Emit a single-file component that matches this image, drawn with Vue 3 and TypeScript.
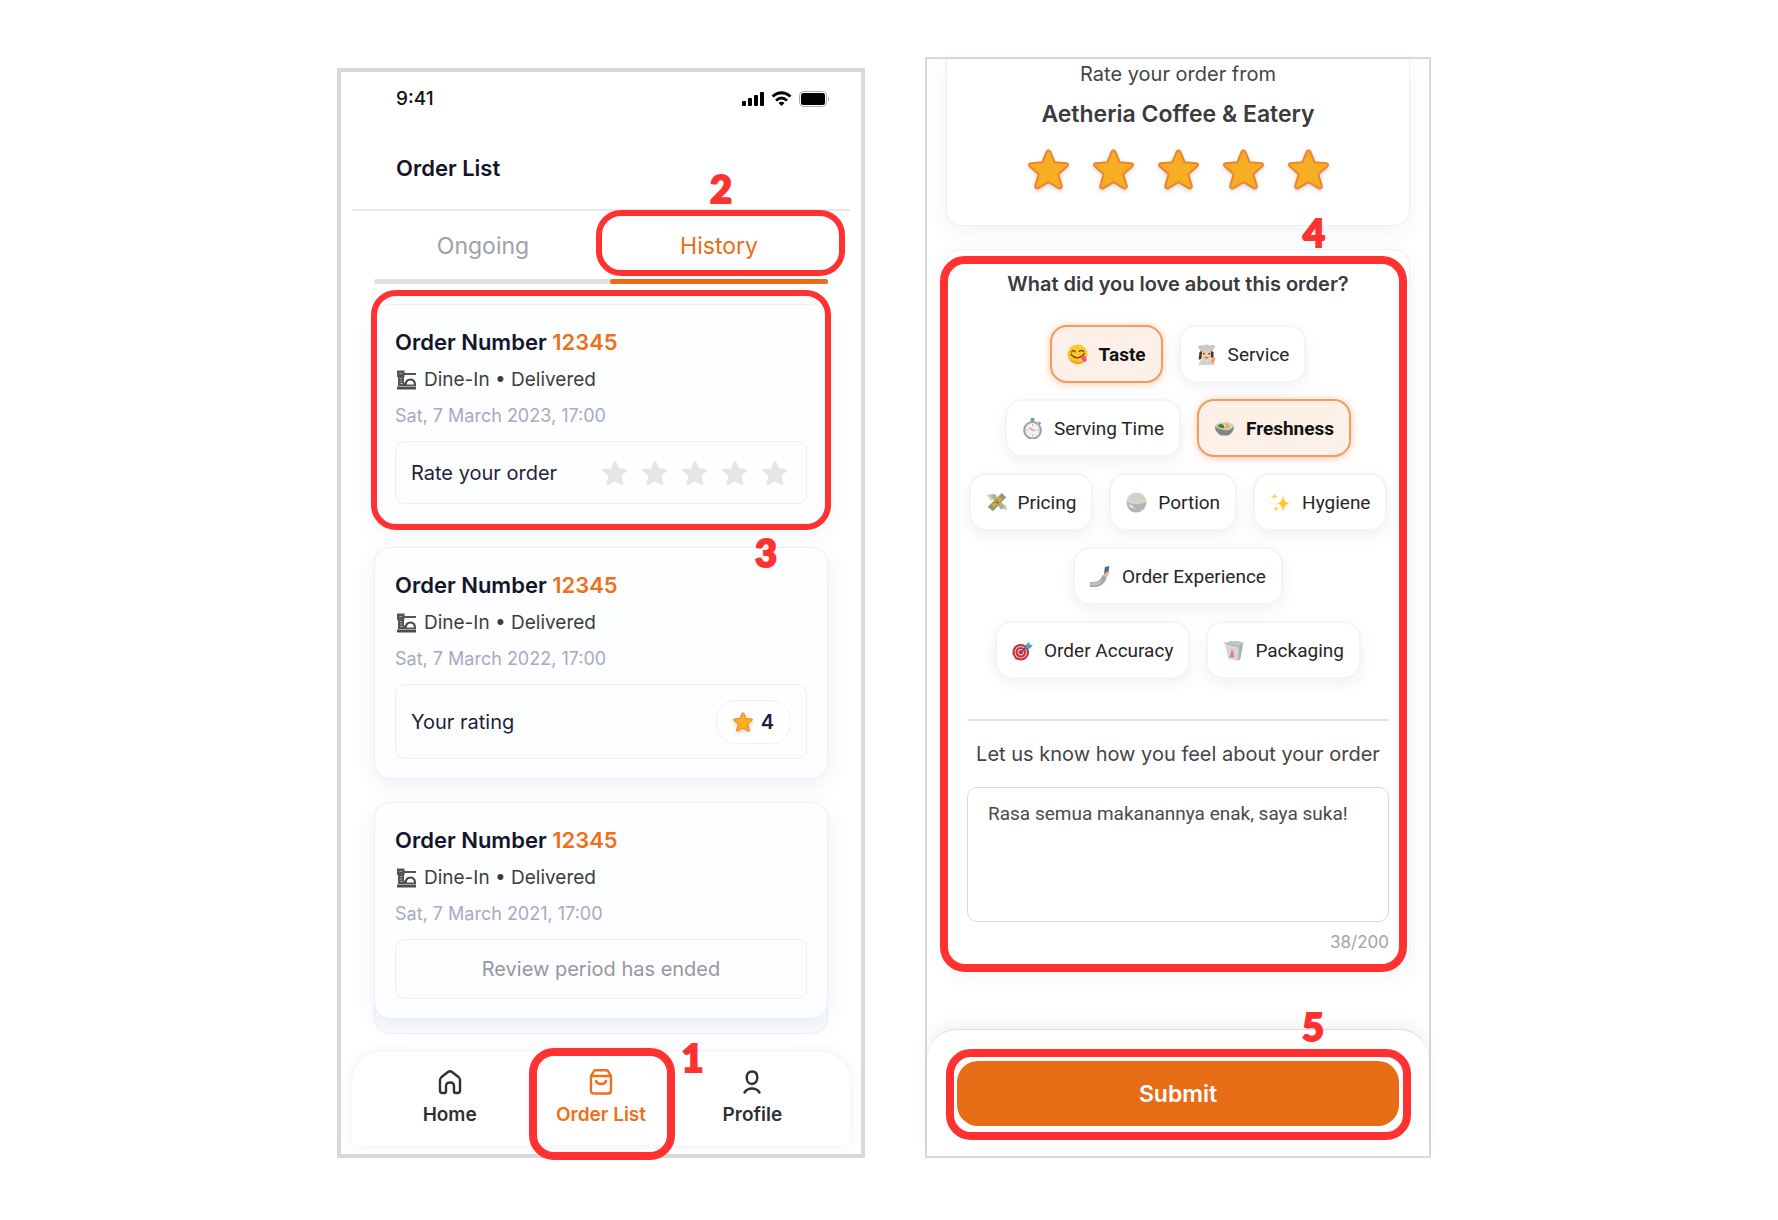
<script setup lang="ts">
import { computed, ref } from 'vue'

interface Order {
  id: number
  number: string
  date: string
  state: 'unrated' | 'rated' | 'ended'
  rating?: number
}

interface Reason {
  icon: string
  label: string
}

const orders: Order[] = [
  { id: 1, number: '12345', date: 'Sat, 7 March 2023, 17:00', state: 'unrated' },
  { id: 2, number: '12345', date: 'Sat, 7 March 2022, 17:00', state: 'rated', rating: 4 },
  { id: 3, number: '12345', date: 'Sat, 7 March 2021, 17:00', state: 'ended' },
]

const reasonRows: Reason[][] = [
  [{ icon: 'yum', label: 'Taste' }, { icon: 'chef', label: 'Service' }],
  [{ icon: 'timer', label: 'Serving Time' }, { icon: 'bowl', label: 'Freshness' }],
  [{ icon: 'money', label: 'Pricing' }, { icon: 'rice', label: 'Portion' }, { icon: 'sparkles', label: 'Hygiene' }],
  [{ icon: 'selfie', label: 'Order Experience' }],
  [{ icon: 'target', label: 'Order Accuracy' }, { icon: 'box', label: 'Packaging' }],
]

const tab = ref<'ongoing' | 'history'>('history')
const picked = ref<string[]>(['Taste', 'Freshness'])
const comment = ref('Rasa semua makanannya enak, saya suka!')
const limit = 200
const counter = computed(() => `${comment.value.length}/${limit}`)

function toggle(label: string) {
  picked.value = picked.value.includes(label)
    ? picked.value.filter((item) => item !== label)
    : [...picked.value, label]
}
</script>

<template>
  <main class="guide">
    <svg class="sprite" aria-hidden="true">
      <symbol id="star" viewBox="0 0 40 40">
        <path d="M18.3 2.4Q20 .2 21.7 2.4L26 12.9 37.6 13.8Q40 14.6 38.4 16.8L29.6 24.5 33 36.3Q32.800 39.200 30 38.300L20 32.400 10 38.300Q7.200 39.200 7 36.300L10.400 24.500 1.600 16.800Q0 14.600 2.400 13.800L14 12.900Z" />
      </symbol>
      <symbol id="dine" viewBox="-2 0 22 20">
        <path d="M0 .5H7.500V3H19V5H7.500V7H7V12Q8 14 10 14.500H19V16H1V7H0Z" fill="#555656" />
        <path d="M3 8.500H5M3 11H5M3 13.500H6M2.500 3.500H5" stroke="#a4a5a6" stroke-width="1" />
        <path d="M8.500 15Q9 9.500 13.500 9.500T18 15" fill="none" stroke="#444545" stroke-width="2" />
        <path d="M0 18H19" stroke="#4d4e4e" stroke-width="3" />
      </symbol>
      <symbol id="yum" viewBox="0 0 24 24">
        <circle cx="12" cy="12" r="11.500" fill="#fcc62d" />
        <path d="M3 17A11.500 11.500 0 0 0 21 19Q12 23 3 17Z" fill="#f19a20" />
        <path d="M5 9.500Q7 6 9.500 9M14 8.500Q17 6 19 9M4.500 12Q12 20 20 11" fill="none" stroke="#6d4112" stroke-width="1.400" stroke-linecap="round" />
        <path d="M16 15Q20 11 22 16T19 20Q17 19 16 15Z" fill="#f0519c" />
      </symbol>
      <symbol id="chef" viewBox="0 0 24 24">
        <path d="M2 3Q5 0 8 2Q12-1 16 2Q20-1 22 3L19 8H5Z" fill="#c9c9c7" />
        <path d="M5 8H19V15Q16 19 12 19T5 15Z" fill="#f2cdb0" />
        <path d="M4 9L7 8 6 17 3 18ZM17 8L20 9V16L17 15Z" fill="#47302a" />
        <path d="M3 24Q4 17 9 17L12 20 16 17Q20 18 21 24Z" fill="#d2d2d2" />
        <path d="M8 11H10M14 11H16" stroke="#3f302b" stroke-width="1.600" />
        <path d="M10 15Q12 17 14 15" fill="none" stroke="#c54a40" stroke-width="1.300" />
        <path d="M17 19L20 14 22 17 20 23Z" fill="#eda067" />
      </symbol>
      <symbol id="timer" viewBox="0 0 24 24">
        <path d="M10 0H14V5H10ZM18 3L22 6 20 8Z" fill="#8b919c" />
        <circle cx="12" cy="14" r="9.500" fill="#f1f1f2" stroke="#9ba0aa" stroke-width="2.400" />
        <path d="M12 7V9M12 19V21M5 14H7M17 14H19" stroke="#a5a8ae" stroke-width="1" />
        <path d="M12 14L8 11M12 14H15" stroke="#e08070" stroke-width="1.200" />
      </symbol>
      <symbol id="bowl" viewBox="0 0 24 24">
        <ellipse cx="12" cy="10" rx="11" ry="5" fill="#b9bcb9" />
        <ellipse cx="12" cy="9.500" rx="9" ry="3.500" fill="#ead9a5" />
        <path d="M4 9Q7 5 11 8L12 11Q8 13 4 9Z" fill="#368a35" />
        <path d="M13 7L17 9M12 11L18 10" stroke="#d69b4d" stroke-width="1.400" />
        <path d="M1 10Q2 17 8 20H16Q22 17 23 10Q18 15 12 14T1 10Z" fill="#7e868a" />
        <path d="M6 1Q8 3 6 5M15 1Q13 3 15 5" fill="none" stroke="#dfe3e5" stroke-width="1" />
      </symbol>
      <symbol id="money" viewBox="0 0 24 24">
        <path d="M1 3L8 2 11 8 5 10ZM15 12L23 15 24 21 15 18Z" fill="#d0d0c3" />
        <path d="M18 1L23 6 8 22 2 17Z" fill="#8b9874" />
        <path d="M5 4L10 2 22 17 17 20Z" fill="#a7ad8a" opacity=".85" />
        <path d="M16 5L19 8 9 18 6 15Z" fill="#d5a938" />
        <path d="M12 9L14 14M10 12L15 12" stroke="#8b6b2a" stroke-width="1.200" />
      </symbol>
      <symbol id="rice" viewBox="0 0 24 24">
        <circle cx="12" cy="12" r="11.500" fill="#c8c8c8" />
        <path d="M1 12Q2 1 12 1T23 12Q12 16 1 12Z" fill="#d9d2c9" />
        <path d="M1 12Q12 16 23 12Q22 22 12 23T1 12Z" fill="#b4b4b6" />
        <path d="M3 14Q5 19 11 19Q7 17 7 15Z" fill="#eee" />
        <path d="M7 5L8 7M12 4L11 6M16 6L17 8M9 9H11" stroke="#bbb2a8" stroke-width="1" />
      </symbol>
      <symbol id="sparkles" viewBox="0 0 24 24">
        <path d="M15 4Q16 12 22 13Q16 14 15 23Q14 14 8 13Q14 12 15 4Z" fill="#ffc928" />
        <path d="M5 1Q5.500 4.500 9 5Q5.500 5.500 5 9Q4.500 5.500 1 5Q4.500 4.500 5 1ZM7 16Q7.500 18.500 10 19Q7.500 19.500 7 22Q6.500 19.500 4 19Q6.500 18.500 7 16Z" fill="#ffd35b" />
      </symbol>
      <symbol id="selfie" viewBox="0 0 24 24">
        <path d="M17 1L22 0 21 8 16 9Z" fill="#456b8c" />
        <path d="M19 6L22 8 18 15 15 12Z" fill="#f0b48c" />
        <path d="M15 10L19 14Q16 22 8 24H0V18Q8 19 11 16Z" fill="#a4a6aa" />
        <path d="M1 19Q8 20 12 17L15 14Q13 21 7 22H1Z" fill="#c0c1c4" />
      </symbol>
      <symbol id="target" viewBox="0 0 24 24">
        <circle cx="10" cy="14" r="9.500" fill="#cd2f38" />
        <circle cx="10" cy="14" r="6.500" fill="none" stroke="#f2bfc2" stroke-width="1.200" />
        <circle cx="10" cy="14" r="3" fill="none" stroke="#f2bfc2" stroke-width="1.200" />
        <path d="M10 14L18 7" stroke="#1f6b80" stroke-width="1.600" />
        <path d="M16 5L20 2 20 5 24 6 20 10 16 9Z" fill="#3eabc4" />
      </symbol>
      <symbol id="box" viewBox="0 0 24 24">
        <path d="M4 3L8 1H18L23 3 20 8H3Z" fill="#c3c4c6" />
        <path d="M2 4L18 8 17 24 6 21Z" fill="#d6d6d8" />
        <path d="M18 8L23 4 20 21 17 24Z" fill="#aeb0b3" />
        <path d="M1 3L8 5 18 8 23 3" fill="none" stroke="#a8aaad" stroke-width="1" />
        <path d="M10 10L12 14 13 20H7L9 15Z" fill="#dc8288" />
      </symbol>
    </svg>

    <section class="phone orders" aria-label="Order List">
      <div class="status">
        <span class="clock">9:41</span>
        <svg width="88" height="16" viewBox="0 0 88 16" aria-hidden="true">
          <rect x="0" y="10" width="4" height="5" rx="1" />
          <rect x="6" y="7" width="4" height="8" rx="1" />
          <rect x="12" y="4" width="4" height="11" rx="1" />
          <rect x="18" y="1" width="4" height="14" rx="1" />
          <g fill="none" stroke="#000" stroke-width="2.800">
            <path d="M30.500 5.500Q39.500-2 48.500 5.500" />
            <path d="M34 9.500Q39.500 4.500 45 9.500" />
          </g>
          <path d="M36.500 12Q39.500 9.500 42.500 12L39.500 15Z" />
          <rect x="57.500" y=".5" width="27" height="15" rx="4" fill="none" stroke="#aaa" />
          <rect x="59" y="2" width="24" height="12" rx="2.500" />
          <path d="M86 5.500Q88 8 86 10.500Z" fill="#aaa" />
        </svg>
      </div>

      <h1 class="heading">Order List</h1>

      <div class="tabs" role="tablist">
        <button type="button" role="tab" class="tab" :class="{ on: tab === 'ongoing' }" :aria-selected="tab === 'ongoing'" @click="tab = 'ongoing'">Ongoing</button>
        <button type="button" role="tab" class="tab" :class="{ on: tab === 'history' }" :aria-selected="tab === 'history'" @click="tab = 'history'">History</button>
        <span class="ring ring-tab"></span>
        <span class="step step-tab">2</span>
      </div>

      <div class="list">
        <article v-for="(order, index) in orders" :key="order.id" class="card">
          <h2 class="number">Order Number <span>{{ order.number }}</span></h2>
          <p class="kind"><svg width="22" height="20"><use href="#dine" /></svg>Dine-In • Delivered</p>
          <p class="date">{{ order.date }}</p>
          <div class="review" :class="order.state">
            <template v-if="order.state === 'unrated'">
              <span>Rate your order</span>
              <div class="rate">
                <button v-for="n in 5" :key="n" type="button" :aria-label="`${n} stars`"><svg width="26" height="26"><use href="#star" /></svg></button>
              </div>
            </template>
            <template v-else-if="order.state === 'rated'">
              <span>Your rating</span>
              <span class="score"><svg class="gold" width="20" height="20"><use href="#star" /></svg>{{ order.rating }}</span>
            </template>
            <span v-else>Review period has ended</span>
          </div>
          <template v-if="index === 0">
            <span class="ring ring-card"></span>
            <span class="step step-card">3</span>
          </template>
        </article>
        <div class="peek"></div>
      </div>

      <nav class="nav">
        <a href="#home">
          <svg width="24" height="26" viewBox="0 0 24 26"><path d="M4.500 24Q2 24 2 21.500V11Q2 9.500 3.500 8L10 3Q12 1.500 14 3L20.500 8Q22 9.500 22 11V21.500Q22 24 19.500 24H17.500Q16 24 16 22V17Q16 13.500 12 13.500T8 17V22Q8 24 6.500 24Z" /></svg>
          Home
        </a>
        <a href="#orders" class="current">
          <svg width="24" height="26" viewBox="0 0 24 26"><path d="M2 7L5 2Q5.500 1.200 6.500 1.200H17.500Q18.500 1.200 19 2L22 7V21.500Q22 24.500 19 24.500H5Q2 24.500 2 21.500ZM2 7H22M7 12Q8 15 12 15T17 12" /></svg>
          Order List
          <span class="ring ring-nav"></span>
          <span class="step step-nav">1</span>
        </a>
        <a href="#profile">
          <svg width="24" height="26" viewBox="0 0 24 26"><path d="M12 2.500C15.500 2.500 17.300 5 17.300 8.500S15.500 15 12 15 6.700 12 6.700 8.500 8.500 2.500 12 2.500ZM4.500 23.500Q7 19.500 12 19.500T19.500 23.500" /></svg>
          Profile
        </a>
      </nav>
    </section>

    <form class="phone rating" aria-label="Rate your order" @submit.prevent>
      <section class="panel venue">
        <p>Rate your order from</p>
        <h2>Aetheria Coffee &amp; Eatery</h2>
        <div class="stars">
          <button v-for="n in 5" :key="n" type="button" :aria-label="`${n} stars`"><svg class="gold" width="41" height="41"><use href="#star" /></svg></button>
        </div>
      </section>

      <section class="panel feedback">
        <h2>What did you love about this order?</h2>
        <div class="reasons">
          <div v-for="(row, index) in reasonRows" :key="index" class="row">
            <button v-for="reason in row" :key="reason.label" type="button" class="chip" :class="{ on: picked.includes(reason.label) }" :aria-pressed="picked.includes(reason.label)" @click="toggle(reason.label)">
              <svg width="21" height="21"><use :href="`#${reason.icon}`" /></svg>{{ reason.label }}
            </button>
          </div>
        </div>
        <hr />
        <label for="comment">Let us know how you feel about your order</label>
        <textarea id="comment" v-model="comment" :maxlength="limit"></textarea>
        <p class="counter">{{ counter }}</p>
        <span class="ring ring-feedback"></span>
        <span class="step step-feedback">4</span>
      </section>

      <div class="action">
        <button type="submit" class="submit">Submit</button>
        <span class="ring ring-submit"></span>
        <span class="step step-submit">5</span>
      </div>
    </form>
  </main>
</template>

<style>
body {
  margin: 0;
  background: #fff;
}
</style>

<style scoped>
* {
  box-sizing: border-box;
}

.guide {
  display: flex;
  justify-content: center;
  align-items: flex-end;
  gap: 60px;
  padding: 57px 10px 63px 0;
  font-family: Inter, "Liberation Sans", sans-serif;
  color: #444;
}

h1, h2, p {
  margin: 0;
}

button {
  padding: 0;
  border: 0;
  background: none;
  font: inherit;
  color: inherit;
  cursor: pointer;
}

svg {
  display: block;
  flex: none;
}

.sprite {
  position: absolute;
  width: 0;
  height: 0;
}

.phone {
  display: flex;
  flex-direction: column;
  min-width: 0;
  background: #fff;
}

.orders {
  flex: 0 1 528px;
  border: 4px solid #d9d9d9;
  padding: 0 11px 9px;
}

.status {
  display: flex;
  justify-content: space-between;
  align-items: center;
  height: 54px;
  padding: 0 20px 0 44px;
}

.clock {
  font-size: 19px;
  font-weight: 500;
  line-height: 24px;
  color: #111;
}

.heading {
  padding: 26px 44px 25px;
  border-bottom: 2px solid #e8e8ea;
  font-size: 22px;
  font-weight: 600;
  line-height: 32px;
  color: #14142b;
}

.tabs {
  position: relative;
  display: grid;
  grid-template-columns: 1fr 1fr;
  gap: 18px;
  height: 73px;
  margin: 0 22px;
}

.tabs::before {
  content: "";
  position: absolute;
  inset: auto 0 0;
  height: 5px;
  border-radius: 3px;
  background: #e0e0e0;
}

.tab {
  position: relative;
  padding-bottom: 4px;
  font-size: 23px;
  line-height: 32px;
  color: #a0a0ac;
}

.tab.on {
  color: #e96d17;
}

.tab.on::after {
  content: "";
  position: absolute;
  inset: auto 0 0;
  height: 5px;
  border-radius: 3px;
  background: #e96d17;
}

.list {
  display: flex;
  flex-direction: column;
  gap: 23px;
  margin: 20px 22px 0;
}

.card {
  position: relative;
  z-index: 1;
  padding: 21px 20px 19px;
  border: 1px solid #eceff5;
  border-radius: 16px;
  background: #fdfeff;
  box-shadow: 0 6px 20px rgba(60, 80, 140, 0.09);
}

.card:first-child {
  z-index: 2;
}

.number {
  font-size: 22px;
  font-weight: 600;
  line-height: 32px;
  color: #14142b;
}

.number span {
  color: #ee701b;
}

.kind {
  display: flex;
  align-items: center;
  gap: 7px;
  margin: 8px 0;
  font-size: 19px;
  line-height: 28px;
  color: #3c3d3d;
}

.date {
  margin-bottom: 11px;
  font-size: 18px;
  line-height: 28px;
  color: #a9a9c0;
}

.review {
  display: flex;
  justify-content: space-between;
  align-items: center;
  padding: 0 15px;
  border: 1px solid #eceef3;
  border-radius: 10px;
  font-size: 20px;
  line-height: 28px;
  color: #1f1f3a;
}

.review.unrated {
  height: 63px;
}

.review.rated {
  height: 75px;
}

.review.ended {
  justify-content: center;
  height: 60px;
  color: #9697a0;
}

.rate {
  display: flex;
  gap: 14px;
  padding-right: 3px;
  fill: #e4e5e7;
}

.gold {
  overflow: visible;
  fill: #f8ae23;
  stroke: #ef8432;
  stroke-width: 2px;
  filter: drop-shadow(0 2px 2px rgba(0, 0, 0, 0.15));
}

.score {
  display: flex;
  align-items: center;
  gap: 8px;
  height: 44px;
  padding: 0 16px;
  border: 1px solid #eef0f3;
  border-radius: 20px;
  background: #fff;
  font-weight: 600;
}

.peek {
  height: 46px;
  margin-top: -54px;
  border: 1px solid #eceff5;
  border-radius: 16px;
  background: #fafcfe;
}

.nav {
  position: relative;
  z-index: 2;
  display: flex;
  height: 93px;
  margin-top: 18px;
  padding: 0 22px;
  border-radius: 30px 30px 0 0;
  background: #fff;
  box-shadow: 0 0 14px rgba(0, 0, 0, 0.07);
}

.nav a {
  position: relative;
  display: flex;
  flex: 1;
  flex-direction: column;
  align-items: center;
  gap: 6px;
  padding-top: 17px;
  font-size: 19px;
  font-weight: 600;
  line-height: 28px;
  color: #303033;
  text-decoration: none;
}

.nav path {
  fill: none;
  stroke: currentColor;
  stroke-width: 2.4px;
  stroke-linecap: round;
  stroke-linejoin: round;
}

.nav .current {
  color: #ee701b;
}

.rating {
  flex: 0 1 506px;
  border: 2px solid #d9d9da;
}

.panel {
  position: relative;
  margin: 0 19px;
  border: 1px solid #eff0f4;
  border-radius: 16px;
  background: #fff;
  box-shadow: 0 6px 20px rgba(60, 80, 140, 0.07);
  text-align: center;
}

.panel h2 {
  color: #3b3b3d;
  font-weight: 600;
}

.venue {
  height: 167px;
  border-top: 0;
  border-radius: 0 0 16px 16px;
}

.venue p {
  font-size: 20px;
  line-height: 30px;
}

.venue h2 {
  margin: 9px 0 19px;
  font-size: 23px;
  line-height: 32px;
}

.stars {
  display: flex;
  justify-content: center;
  gap: 24px;
}

.feedback {
  margin-top: 23px;
  padding: 19px 20px 11px;
}

.feedback h2 {
  font-size: 20px;
  line-height: 30px;
}

.reasons {
  display: flex;
  flex-direction: column;
  gap: 16px;
  margin: 26px 0 40px;
}

.row {
  display: flex;
  justify-content: center;
  gap: 16px;
}

.chip {
  display: flex;
  align-items: center;
  gap: 11px;
  height: 58px;
  padding: 0 15px;
  border: 2px solid #f3f4f7;
  border-radius: 17px;
  background: #fff;
  box-shadow: 0 5px 14px rgba(60, 80, 140, 0.08);
  font-family: Roboto, sans-serif;
  font-size: 19px;
  white-space: nowrap;
  color: #262626;
}

.chip.on {
  border-color: #f49b5f;
  background: #fdf0e9;
  box-shadow: 0 1px 8px rgba(240, 120, 40, 0.4);
  font-weight: 700;
  color: #111;
}

hr {
  height: 2px;
  margin: 0;
  border: 0;
  background: #e0dff8;
}

label {
  display: block;
  margin: 18px 0;
  font-size: 20px;
  line-height: 30px;
  white-space: nowrap;
}

textarea {
  display: block;
  width: 100%;
  height: 135px;
  padding: 14px 20px;
  border: 1px solid #dcdcdf;
  border-radius: 10px;
  background: #fff;
  font-family: Roboto, sans-serif;
  font-size: 19px;
  line-height: 24px;
  color: #4a4a4c;
  resize: none;
}

.counter {
  margin-top: 5px;
  font-size: 17px;
  line-height: 30px;
  text-align: right;
  color: #a3a3ab;
}

.action {
  position: relative;
  margin-top: 60px;
  padding: 31px 30px 30px;
  border-top: 1px solid #dbd9f3;
  border-radius: 30px 30px 0 0;
  background: #fff;
  box-shadow: 0 -6px 16px rgba(0, 0, 0, 0.05);
}

.submit {
  display: block;
  width: 100%;
  height: 65px;
  border-radius: 21px;
  background: #e76d17;
  font-size: 23px;
  font-weight: 600;
  color: #fff;
}

/* Walkthrough markers laid over the screens */
.ring {
  position: absolute;
  z-index: 3;
  border: 8px solid #ff3131;
  border-radius: 25px;
  pointer-events: none;
}

.step {
  position: absolute;
  z-index: 3;
  font-family: Lato, sans-serif;
  font-size: 38px;
  font-weight: 900;
  line-height: 38px;
  color: #ff3131;
  -webkit-text-stroke: 2px #ff3131;
}

.ring-tab {
  inset: -1px -17px 8px 222px;
  border-width: 6px;
}

.step-tab {
  right: 96px;
  top: -42px;
}

.ring-card {
  inset: -15px -4px -7px;
  border-width: 6px;
}

.step-card {
  right: 50px;
  bottom: -48px;
}

.ring-nav {
  inset: -4px 2px -15px 4px;
}

.step-nav {
  right: -27px;
  top: -14px;
}

.ring-feedback {
  inset: 6px 2px -4px -7px;
}

.step-feedback {
  right: 84px;
  top: -37px;
}

.ring-submit {
  inset: 19px 18px 16px 19px;
}

.step-submit {
  right: 105px;
  top: -23px;
}
</style>
